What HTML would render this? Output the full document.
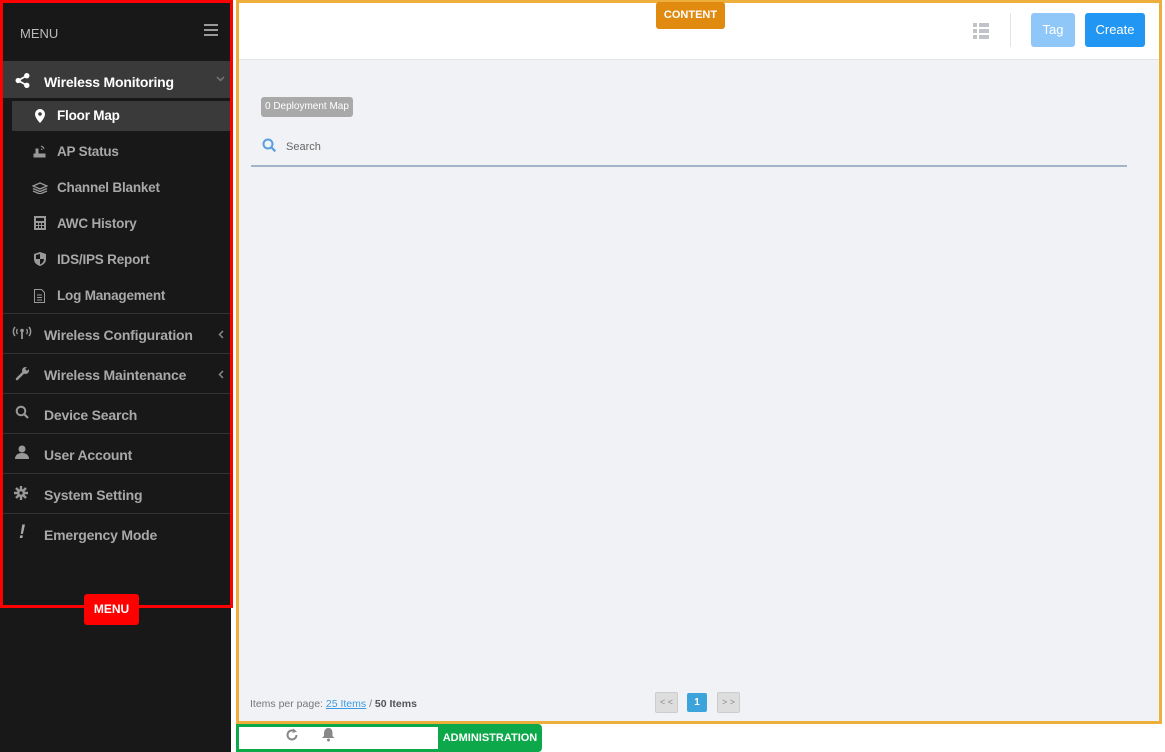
<!DOCTYPE html>
<html><head><meta charset="utf-8"><style>
*{box-sizing:border-box;margin:0;padding:0}
body{width:1165px;height:752px;overflow:hidden;background:#fff;font-family:"Liberation Sans",sans-serif;position:relative}
.side{position:absolute;left:0;top:0;width:231px;height:752px;background:#181818}
.redbox{position:absolute;left:0;top:0;width:233px;height:608px;border:3px solid #ff0000}
.menuhead{position:absolute;left:20px;top:26px;color:#bbb;font-size:13px}
.ham{position:absolute;left:204px;top:24px;width:14px}
.ham i{display:block;height:2px;background:#999;margin-bottom:3px}
.wm{position:absolute;left:3px;top:61px;width:227px;height:37px;background:#3a3a3a}
.item{position:absolute;color:#a8a8a8;font-weight:bold;font-size:14px;letter-spacing:-0.2px}
.sub{position:absolute;left:57px;color:#a8a8a8;font-weight:bold;font-size:13.5px;letter-spacing:-0.2px}
.sep{position:absolute;left:3px;width:227px;height:1px;background:#333}
.ico{position:absolute;color:#a8a8a8}
.content{position:absolute;left:236px;top:0;width:926px;height:724px;border:3px solid #eeae3b;background:#f0f2f5}
.hdr{position:absolute;left:0;top:0;right:0;height:57px;background:#fff;border-bottom:1px solid #e2e4e8}
.badge{position:absolute;color:#fff;font-weight:bold;font-size:11px;text-align:center;border-radius:3px}
</style></head><body>
<div class="side"></div>
<div class="redbox"></div>
<div class="menuhead">MENU</div>
<div class="ham"><i></i><i></i><i></i></div>
<div class="wm"></div>
<svg class="ico" style="left:15px;top:73px" width="15" height="15" viewBox="0 0 14 14" fill="#fff"><circle cx="11" cy="2.5" r="2.5"/><circle cx="3" cy="7" r="2.5"/><circle cx="11" cy="11.5" r="2.5"/><path d="M11 2.5L3 7l8 4.5" stroke="#fff" stroke-width="1.6" fill="none"/></svg>
<div class="item" style="left:44px;top:74px;color:#fff">Wireless Monitoring</div>
<svg style="position:absolute;left:216px;top:76px" width="9" height="6"><path d="M1 1l3.5 3.5L8 1" stroke="#777" stroke-width="1.5" fill="none"/></svg>
<div style="position:absolute;left:12px;top:101px;width:218px;height:30px;background:#3a3a3a"></div>
<svg style="position:absolute;left:35px;top:109px" width="10" height="14" viewBox="0 0 10 14"><path d="M5 0a5 5 0 0 0-5 5c0 4 5 9 5 9s5-5 5-9a5 5 0 0 0-5-5z" fill="#fff"/><circle cx="5" cy="5" r="1.8" fill="#3a3a3a"/></svg>
<div class="sub" style="top:108px;color:#fff">Floor Map</div>
<svg class="ico" style="left:33px;top:144px" width="14" height="14"><path d="M1 13h11v-3H5V5H3v5H1z M8 2a4 4 0 0 1 3 3 M8 5a1 1 0 0 1 1 1" stroke="#999" fill="#999"/></svg>
<div class="sub" style="top:144px">AP Status</div>
<svg class="ico" style="left:32px;top:182px" width="16" height="12"><path d="M8 1l7 3-7 3-7-3z M1 6.5l7 3 7-3 M1 9l7 3 7-3" stroke="#999" fill="none" stroke-width="1.3"/></svg>
<div class="sub" style="top:180px">Channel Blanket</div>
<svg class="ico" style="left:34px;top:216px" width="12" height="14"><rect x="0" y="0" width="12" height="14" fill="#999"/><rect x="2" y="2" width="8" height="3" fill="#181818"/><g fill="#181818"><rect x="2" y="7" width="2" height="2"/><rect x="5" y="7" width="2" height="2"/><rect x="8" y="7" width="2" height="2"/><rect x="2" y="10" width="2" height="2"/><rect x="5" y="10" width="2" height="2"/><rect x="8" y="10" width="2" height="2"/></g></svg>
<div class="sub" style="top:216px">AWC History</div>
<svg class="ico" style="left:34px;top:252px" width="12" height="14"><path d="M6 0l6 2v5c0 4-3 6-6 7-3-1-6-3-6-7V2z" fill="#999"/><path d="M6 2v5h4c0 3-2 4.5-4 5.5V7H2V3z" fill="#181818"/></svg>
<div class="sub" style="top:252px">IDS/IPS Report</div>
<svg class="ico" style="left:34px;top:289px" width="11" height="14"><path d="M0.5 0.5h7l3 3v10h-10z" stroke="#999" fill="none"/><path d="M3 6h5M3 8.5h5M3 11h5" stroke="#999"/></svg>
<div class="sub" style="top:288px">Log Management</div>
<div class="sep" style="top:313px"></div>
<svg class="ico" style="left:12px;top:325px" width="20" height="14"><path d="M3 2a7 7 0 0 0 0 9M5.5 4a4 4 0 0 0 0 5M17 2a7 7 0 0 1 0 9M14.5 4a4 4 0 0 1 0 5" stroke="#999" stroke-width="1.4" fill="none"/><circle cx="10" cy="5.5" r="1.8" fill="#999"/><path d="M10 6v8" stroke="#999" stroke-width="1.8"/></svg>
<div class="item" style="left:44px;top:327px">Wireless Configuration</div>
<svg style="position:absolute;left:218px;top:330px" width="6" height="9"><path d="M5 1L1.5 4.5 5 8" stroke="#888" stroke-width="1.5" fill="none"/></svg>
<div class="sep" style="top:353px"></div>
<svg class="ico" style="left:15px;top:366px" width="15" height="15"><path d="M2 13l7-7" stroke="#999" stroke-width="2.5" stroke-linecap="round"/><circle cx="10.5" cy="4.5" r="3.5" fill="#999"/><circle cx="12" cy="3" r="1.5" fill="#181818"/></svg>
<div class="item" style="left:44px;top:367px">Wireless Maintenance</div>
<svg style="position:absolute;left:218px;top:370px" width="6" height="9"><path d="M5 1L1.5 4.5 5 8" stroke="#888" stroke-width="1.5" fill="none"/></svg>
<div class="sep" style="top:393px"></div>
<svg class="ico" style="left:15px;top:405px" width="14" height="14"><circle cx="6" cy="6" r="4.3" stroke="#999" stroke-width="2" fill="none"/><path d="M9 9l4 4" stroke="#999" stroke-width="2.2"/></svg>
<div class="item" style="left:44px;top:407px">Device Search</div>
<div class="sep" style="top:433px"></div>
<svg class="ico" style="left:15px;top:445px" width="14" height="14"><circle cx="7" cy="4" r="3.5" fill="#999"/><path d="M0 14c0-4 3-6 7-6s7 2 7 6z" fill="#999"/></svg>
<div class="item" style="left:44px;top:447px">User Account</div>
<div class="sep" style="top:473px"></div>
<svg class="ico" style="left:14px;top:486px" width="14" height="14" viewBox="0 0 14 14"><g stroke="#999" stroke-width="2.4"><path d="M7 0v14M0 7h14M2 2l10 10M12 2L2 12"/></g><circle cx="7" cy="7" r="4" fill="#999"/><circle cx="7" cy="7" r="1.6" fill="#181818"/></svg>
<div class="item" style="left:44px;top:487px">System Setting</div>
<div class="sep" style="top:513px"></div>
<div class="ico" style="left:19px;top:522px;font-size:19px;font-weight:bold;font-style:italic">!</div>
<div class="item" style="left:44px;top:527px">Emergency Mode</div>
<div class="badge" style="left:84px;top:594px;width:55px;height:31px;line-height:31px;background:#ff0000;font-size:12px">MENU</div>

<div class="content">
 <div class="hdr">
  <div style="position:absolute;left:734px;top:20px">
   <div style="display:flex;gap:2px;margin-bottom:2px"><i style="width:4px;height:4px;background:#c0c3c8"></i><i style="width:10px;height:4px;background:#c0c3c8"></i></div>
   <div style="display:flex;gap:2px;margin-bottom:2px"><i style="width:4px;height:4px;background:#c0c3c8"></i><i style="width:10px;height:4px;background:#c0c3c8"></i></div>
   <div style="display:flex;gap:2px"><i style="width:4px;height:4px;background:#c0c3c8"></i><i style="width:10px;height:4px;background:#c0c3c8"></i></div>
  </div>
  <div style="position:absolute;left:771px;top:10px;width:1px;height:34px;background:#e0e3e8"></div>
  <div style="position:absolute;left:792px;top:10px;width:44px;height:34px;background:#8fc8f8;border-radius:3px;color:#fff;font-size:13px;text-align:center;line-height:34px">Tag</div>
  <div style="position:absolute;left:846px;top:10px;width:60px;height:34px;background:#2196f3;border-radius:3px;color:#fff;font-size:13px;text-align:center;line-height:34px">Create</div>
 </div>
 <div style="position:absolute;left:22px;top:94px;height:20px;padding:0 4px;background:#a9a9a9;color:#fff;border-radius:3px;font-size:10px;line-height:20px">0 Deployment Map</div>
 <svg style="position:absolute;left:23px;top:135px" width="15" height="15"><circle cx="6" cy="6" r="4.5" stroke="#5a9de0" stroke-width="2" fill="none"/><path d="M9.3 9.3l4 4" stroke="#5a9de0" stroke-width="2.2"/></svg>
 <div style="position:absolute;left:47px;top:138px;color:#666;font-size:11px">Search</div>
 <div style="position:absolute;left:12px;top:162px;width:876px;height:2px;background:#a2b5c8"></div>
 <div style="position:absolute;left:11px;top:695px;font-size:10.5px;color:#777">Items per page: <span style="color:#3b9ae1;text-decoration:underline">25 Items</span> / <b style="color:#555">50 Items</b></div>
 <div style="position:absolute;left:416px;top:689px;width:23px;height:21px;background:#ddd;border:1px solid #ccc;border-radius:2px;color:#888;font-size:9px;text-align:center;line-height:19px">&lt; &lt;</div>
 <div style="position:absolute;left:448px;top:690px;width:20px;height:19px;background:#3ca4db;border-radius:2px;color:#fff;font-size:10px;font-weight:bold;text-align:center;line-height:19px">1</div>
 <div style="position:absolute;left:478px;top:689px;width:23px;height:21px;background:#ddd;border:1px solid #ccc;border-radius:2px;color:#888;font-size:9px;text-align:center;line-height:19px">&gt; &gt;</div>
</div>

<div style="position:absolute;left:236px;top:724px;width:306px;height:28px;border:3px solid #0ca84a;border-right:none;border-radius:0 4px 4px 0"></div>
<div style="position:absolute;left:438px;top:724px;width:104px;height:28px;background:#0ca84a;border-radius:0 5px 5px 0;color:#fff;font-weight:bold;font-size:11px;text-align:center;line-height:28px">ADMINISTRATION</div>
<svg style="position:absolute;left:285px;top:728px" width="14" height="14"><path d="M11.5 7a4.5 4.5 0 1 1-2-3.8" stroke="#888" stroke-width="2" fill="none"/><path d="M8 0.5l4 3-4.5 1.5z" fill="#888"/></svg>
<svg style="position:absolute;left:322px;top:727px" width="13" height="15"><path d="M6.5 1c3 0 4 2.5 4 5v3l2 2H0l2-2V6c0-2.5 1.5-5 4.5-5z" fill="#888"/><circle cx="6.5" cy="13" r="1.5" fill="#888"/></svg>
<div class="badge" style="left:656px;top:2px;width:69px;height:27px;line-height:27px;background:#e08a10">CONTENT</div>
</body></html>
